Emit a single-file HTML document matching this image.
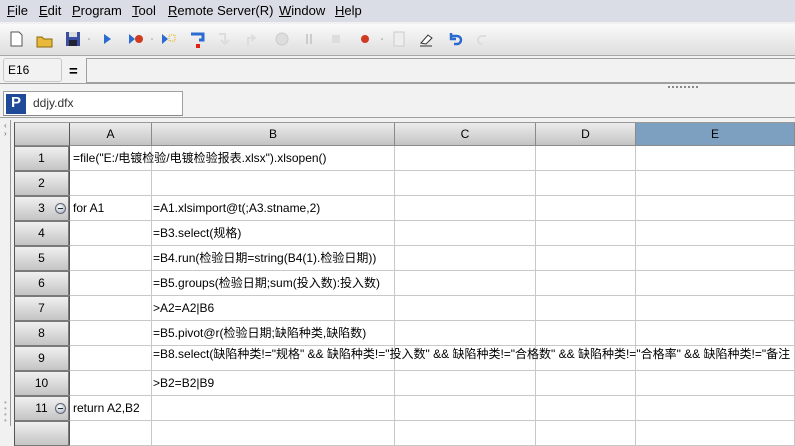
<!DOCTYPE html>
<html><head><meta charset="utf-8"><style>
*{margin:0;padding:0;box-sizing:border-box}
body{width:795px;height:426px;overflow:hidden;background:#f0f1f0;font-family:"Liberation Sans","Noto Sans CJK SC",sans-serif;font-size:12px;color:#000;position:relative}
.menu{position:absolute;left:0;top:0;width:795px;height:22px;background:#dadde5}
.menu span{position:absolute;top:3px;font-size:13px}
.tb{position:absolute;left:0;top:24px;width:795px;height:32px;background:linear-gradient(#fafafa,#dedede);border-bottom:1px solid #a8a8a8}
.fb{position:absolute;left:0;top:57px;width:795px;height:27px;background:#f1f2f1;border-bottom:1px solid #a0a0a0}
.cell{position:absolute;border-right:1px solid #c8c8c8;border-bottom:1px solid #c8c8c8;background:#fff;white-space:nowrap;overflow:visible;padding-left:4px;line-height:24px;font-size:12px}
.hdr{position:absolute;background:linear-gradient(#ececec,#c4c4c4);border:1px solid #8a8a8a;border-top:none;border-left:none;text-align:center;line-height:22px;font-size:12px}
.rh{position:absolute;left:14px;width:55px;height:25px;background:linear-gradient(#f0f0f0,#c4c4c4);border:1px solid #7a7a7a;border-left:1px solid #555;text-align:center;line-height:23px;font-size:12px}
.minus{position:absolute;left:55px;width:11px;height:11px;border-radius:50%;background:radial-gradient(circle at 40% 35%,#fff,#9ab);border:1px solid #667}
.minus:after{content:"";position:absolute;left:2px;top:4px;width:5px;height:1px;background:#223}
</style></head><body>
<div class="menu">
<span style="left:7px"><u>F</u>ile</span><span style="left:39px"><u>E</u>dit</span><span style="left:72px"><u>P</u>rogram</span><span style="left:132px"><u>T</u>ool</span><span style="left:168px"><u>R</u>emote Server(R)</span><span style="left:279px"><u>W</u>indow</span><span style="left:335px"><u>H</u>elp</span>
</div>
<div class="tb">
<svg width="795" height="32" style="position:absolute;left:0;top:0">
<path d="M11 8h8l3 3v11h-11z" fill="#fff" stroke="#555"/>
<path d="M37 13h5l2 2h8v8h-15z" fill="#e8b93a" stroke="#8a6a10"/>
<rect x="66" y="8" width="14" height="14" fill="#3a4fa0"/><rect x="69" y="8" width="8" height="5" fill="#ddd"/><rect x="69" y="16" width="8" height="6" fill="#223"/>
<circle cx="89" cy="15" r="0.8" fill="#999"/><circle cx="152" cy="15" r="0.8" fill="#999"/><circle cx="382" cy="15" r="0.8" fill="#999"/>
<path d="M104 10l7 5-7 5z" fill="#2b6ad0"/>
<path d="M129 10l6 5-6 5z" fill="#2b6ad0"/><circle cx="139" cy="15" r="4" fill="#d03a20"/>
<path d="M162 10l6 5-6 5z" fill="#2b6ad0"/><rect x="169" y="11" width="6" height="6" fill="none" stroke="#e8b000" stroke-dasharray="1 1"/>
<path d="M191 10h12v6h-4" fill="none" stroke="#2b6ad0" stroke-width="3"/><rect x="196" y="20" width="4" height="4" fill="#e02010"/>
<path d="M219 10h6v8M221 16l4 4 4-4" fill="none" stroke="#ddd" stroke-width="2"/>
<path d="M248 22v-8h6M251 11l4 3-4 3" fill="none" stroke="#ddd" stroke-width="2"/>
<circle cx="282" cy="15" r="6" fill="#ddd" stroke="#ccc"/>
<rect x="306" y="10" width="2" height="10" fill="#ccc"/><rect x="310" y="10" width="2" height="10" fill="#ccc"/>
<rect x="332" y="11" width="8" height="8" fill="#ddd"/>
<circle cx="365" cy="15" r="4" fill="#d03a20"/>
<rect x="394" y="8" width="10" height="14" fill="#eee" stroke="#ccc"/>
<path d="M421 19l7-8 4 3-6 6z" fill="#fff" stroke="#333"/><path d="M420 22h12" stroke="#333"/>
<path d="M451 12h6a4 4 0 0 1 0 8h-3M451 9v6h5" fill="none" stroke="#2b6ad0" stroke-width="2.5"/>
<path d="M486 12h-4a4 4 0 0 0 0 8" fill="none" stroke="#ddd" stroke-width="2"/>
</svg>
</div>
<div class="fb">
<div style="position:absolute;left:3px;top:1px;width:59px;height:24px;border:1px solid #c8c8c8;border-radius:3px;padding:4px 4px;font-size:12px">E16</div>
<div style="position:absolute;left:69px;top:6px;font-size:15px;font-weight:bold">=</div>
<div style="position:absolute;left:86px;top:1px;width:712px;height:25px;border:1px solid #a0a0a0;border-right:none;background:#f1f2f1"></div>
</div>
<div style="position:absolute;left:0;top:85px;width:795px;height:33px;background:#f1f2f1;border-bottom:1px solid #a0a0a0"></div>
<div style="position:absolute;left:668px;top:86px;width:30px;height:2px;border-top:2px dotted #888"></div>
<div style="position:absolute;left:3px;top:91px;width:180px;height:25px;background:#fff;border:1px solid #a0a0a0;border-bottom-color:#888">
<div style="position:absolute;left:2px;top:2px;width:20px;height:20px;background:#1f4a98;color:#fff;font-weight:bold;font-size:15px;text-align:center;line-height:18px">P</div>
<span style="position:absolute;left:29px;top:4px;color:#333">ddjy.dfx</span></div>
<div style="position:absolute;left:0;top:118px;width:795px;height:308px;background:#f0f1f0"></div>
<div style="position:absolute;left:4px;top:122px;font-size:8px;color:#666;line-height:8px">‹<br>›</div>
<div style="position:absolute;left:4px;top:400px;font-size:8px;color:#aaa;line-height:6px">•<br>•<br>•<br>•</div>
<div style="position:absolute;left:10px;top:120px;width:1px;height:306px;background:#999"></div>
<div style="position:absolute;left:14px;top:122px;width:781px;height:304px;background:#fff;border-top:1px solid #999;border-left:1px solid #555"></div>
<div class="hdr" style="left:15px;top:123px;width:55px;height:23px"></div>
<div class="hdr" style="left:69px;top:123px;width:83px;height:23px;border-left:1px solid #555">A</div>
<div class="hdr" style="left:152px;top:123px;width:243px;height:23px">B</div>
<div class="hdr" style="left:395px;top:123px;width:141px;height:23px">C</div>
<div class="hdr" style="left:536px;top:123px;width:100px;height:23px">D</div>
<div class="hdr" style="left:636px;top:123px;width:159px;height:23px;background:#7ea0c0">E</div>
<div id="rows"></div>
<script>
var A=["","","for A1","","","","","","","","return A2,B2",""];
var B=['=file("E:/电镀检验/电镀检验报表.xlsx").xlsopen()',"","=A1.xlsimport@t(;A3.stname,2)","=B3.select(规格)","=B4.run(检验日期=string(B4(1).检验日期))","=B5.groups(检验日期;sum(投入数):投入数)",">A2=A2|B6","=B5.pivot@r(检验日期;缺陷种类,缺陷数)",'=B8.select(缺陷种类!="规格" &amp;&amp; 缺陷种类!="投入数" &amp;&amp; 缺陷种类!="合格数" &amp;&amp; 缺陷种类!="合格率" &amp;&amp; 缺陷种类!="备注',">B2=B2|B9","",""];
var h="";
for(var i=0;i<12;i++){var y=146+i*25;
h+='<div class="rh" style="top:'+y+'px">'+(i<11?(i+1):'')+'</div>';
if(i==2||i==10)h+='<div class="minus" style="top:'+(y+7)+'px"></div>';
h+='<div class="cell" style="left:69px;top:'+y+'px;width:83px;height:25px;border-left:1px solid #555"></div>';
h+='<div class="cell" style="left:152px;top:'+y+'px;width:243px;height:25px"></div>';
h+='<div class="cell" style="left:395px;top:'+y+'px;width:141px;height:25px"></div>';
h+='<div class="cell" style="left:536px;top:'+y+'px;width:100px;height:25px"></div>';
h+='<div class="cell" style="left:636px;top:'+y+'px;width:159px;height:25px"></div>';
if(A[i])h+='<div style="position:absolute;left:73px;top:'+y+'px;line-height:24px">'+A[i]+'</div>';
var bt=(i==0)?73:153; var lh=(i==8)?'line-height:16px':'line-height:24px';
if(B[i])h+='<div style="position:absolute;left:'+bt+'px;top:'+y+'px;'+lh+';white-space:nowrap">'+B[i]+'</div>';
}
document.getElementById("rows").outerHTML=h;
</script>
</body></html>
